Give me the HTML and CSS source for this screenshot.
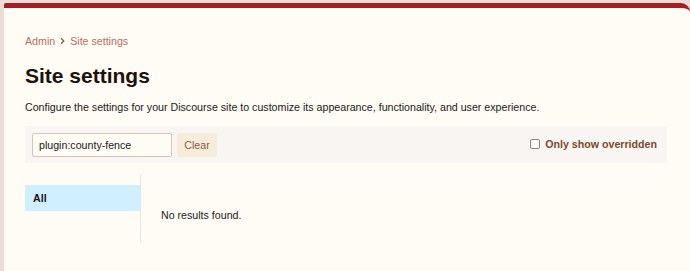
FILE: index.html
```html
<!DOCTYPE html>
<html lang="en">
<head>
<meta charset="utf-8">
<title>Site settings</title>
<link rel="stylesheet" href="styles.css">
</head>
<body>
<div class="card">
  <nav class="breadcrumb">
    <a href="#">Admin</a>
    <svg class="chev" width="7" height="8" viewBox="0 0 7 8"><path d="M2 1.3 L4.8 4 L2 6.7" fill="none" stroke="currentColor" stroke-width="1.3"/></svg>
    <a href="#">Site settings</a>
  </nav>
  <h1 class="title">Site settings</h1>
  <p class="desc">Configure the settings for your Discourse site to customize its appearance, functionality, and user experience.</p>
  <div class="filter-bar">
    <div class="filter-left">
      <input class="filter-input" type="text" value="plugin:county-fence">
      <button class="btn-clear">Clear</button>
    </div>
    <label class="overridden">
      <span class="cb"></span>
      <span>Only show overridden</span>
    </label>
  </div>
  <div class="main">
    <aside class="sidebar">
      <div class="cat active">All</div>
    </aside>
    <div class="results">No results found.</div>
  </div>
</div>
</body>
</html>
```
FILE: styles.css
```css
html, body {
  margin: 0;
  padding: 0;
}
body {
  background: #ecdcd5;
  padding: 3px 0 0 4px;
  font-family: "Liberation Sans", Arial, sans-serif;
  font-size: 10.65px;
  height: 100vh;
  box-sizing: border-box;
  overflow: hidden;
}
.card {
  background: #fffbf5;
  border-top: 5px solid #a31f22;
  border-radius: 2px 9px 0 0;
  padding: 24px 23px 0 21px;
  height: 100%;
  box-sizing: border-box;
}
.breadcrumb {
  display: flex;
  align-items: center;
  gap: 4px;
  line-height: 18px;
  color: #b3715d;
}
.breadcrumb a {
  color: #b3715d;
  text-decoration: none;
}
.chev {
  color: #8a5a48;
}
.title {
  margin: 12px 0 0;
  font-size: 21px;
  line-height: 28px;
  font-weight: bold;
  color: #1c110c;
}
.desc {
  margin: 8px 0 0;
  line-height: 18px;
  color: #231a16;
}
.filter-bar {
  margin-top: 10px;
  background: #f9f5f2;
  padding: 7px 10px 6px 7px;
  display: flex;
  align-items: flex-start;
  justify-content: space-between;
}
.filter-left {
  display: flex;
  gap: 5px;
}
.filter-input {
  width: 140px;
  height: 24px;
  box-sizing: border-box;
  border: 1px solid #d8c4ba;
  border-radius: 2px;
  background: #fffbf5;
  padding: 0 6px;
  font-family: inherit;
  font-size: inherit;
  color: #231a16;
  outline: none;
}
.btn-clear {
  height: 24px;
  width: 40px;
  border: none;
  border-radius: 2px;
  background: #f6ecdc;
  color: #8b5a3c;
  font-family: inherit;
  font-size: inherit;
  padding: 0;
}
.overridden {
  display: flex;
  align-items: center;
  gap: 5px;
  margin-top: 5px;
  font-weight: bold;
  color: #7a4a2e;
}
.cb {
  width: 8px;
  height: 8px;
  border: 1px solid #8a8380;
  border-radius: 2px;
  background: #fff;
}
.main {
  display: flex;
  margin-top: 11px;
}
.sidebar {
  width: 115px;
  border-right: 1px solid #ede5df;
  padding: 11px 0 32px;
}
.cat {
  height: 26px;
  line-height: 26px;
  padding-left: 8px;
  font-weight: bold;
  color: #1c110c;
}
.cat.active {
  background: #d1f0ff;
}
.results {
  padding: 33px 0 0 20px;
  line-height: 16px;
  color: #231a16;
}
```
